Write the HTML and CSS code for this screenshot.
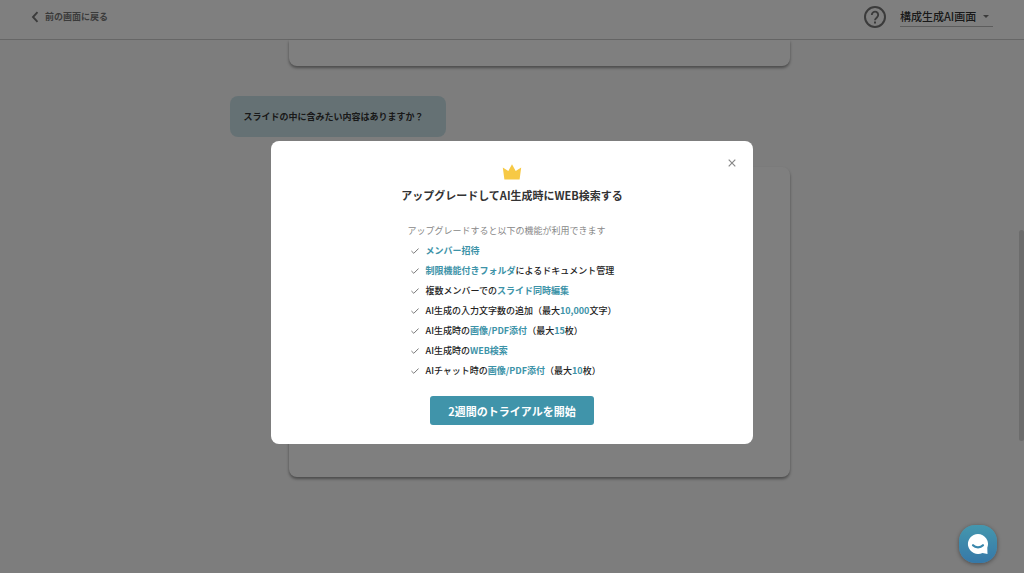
FILE: index.html
```html
<!DOCTYPE html>
<html lang="ja">
<head>
    <meta charset="UTF-8">
    <meta name="viewport" content="width=device-width, initial-scale=1.0">
    <title>構成生成AI画面</title>
    <link rel="stylesheet" href="styles.css">
</head>
<body>
    <div class="page">
        <header class="header">
            <a class="back" href="#">
                <svg width="8" height="12" viewBox="0 0 8 12" aria-hidden="true">
                    <path d="M6.500 1.200 2 6l4.500 4.800" fill="none" stroke="currentColor" stroke-width="1.900"/>
                </svg>
                前の画面に戻る
            </a>
            <div class="header-right">
                <button class="help" aria-label="ヘルプ">
                    <svg width="24" height="24" viewBox="0 0 24 24" aria-hidden="true">
                        <circle cx="12" cy="12" r="10" fill="none" stroke="currentColor" stroke-width="2"/>
                        <path d="M8.800 9.900a3.200 3.200 0 1 1 5.300 2.400c-1.200 1-2.100 1.500-2.100 3" fill="none" stroke="currentColor" stroke-width="1.900"/>
                        <rect x="11" y="16.500" width="2" height="2" fill="currentColor"/>
                    </svg>
                </button>
                <div class="screen-select">
                    <select aria-label="画面の切り替え">
                        <option>構成生成AI画面</option>
                    </select>
                    <svg width="6" height="3" viewBox="0 0 6 3" aria-hidden="true">
                        <path d="M0 0h6L3 3z" fill="currentColor"/>
                    </svg>
                </div>
            </div>
        </header>

        <div class="content">
            <main class="chat">
                <div class="card card-prev"></div>
                <p class="bubble">スライドの中に含みたい内容はありますか？</p>
                <div class="card card-answer"></div>
            </main>
            <div class="scrollbar"><div class="thumb"></div></div>
        </div>
    </div>

    <div class="overlay">
        <section class="modal" role="dialog" aria-modal="true" aria-labelledby="modalTitle">
            <button class="close" aria-label="閉じる">
                <svg width="8" height="8" viewBox="0 0 8 8" aria-hidden="true">
                    <path d="M.7.7l6.600 6.600M7.300.7.7 7.300" stroke="currentColor" stroke-width="1.200"/>
                </svg>
            </button>
            <svg class="crown" width="20" height="16" viewBox="0 0 20 16" aria-hidden="true">
                <path d="M.8 3.400 6.300 7 10 .2 13.700 7l5.500-3.600L17.600 15.400H2.400z" fill="#f7c945"/>
            </svg>
            <h1 id="modalTitle">アップグレードしてAI生成時にWEB検索する</h1>

            <div class="features">
                <p>アップグレードすると以下の機能が利用できます</p>
                <ul>
                    <li><span><b>メンバー招待</b></span></li>
                    <li><span><b>制限機能付きフォルダ</b>によるドキュメント管理</span></li>
                    <li><span>複数メンバーでの<b>スライド同時編集</b></span></li>
                    <li><span>AI生成の入力文字数の追加（最大<b>10,000</b>文字）</span></li>
                    <li><span>AI生成時の<b>画像/PDF添付</b>（最大<b>15</b>枚）</span></li>
                    <li><span>AI生成時の<b>WEB検索</b></span></li>
                    <li><span>AIチャット時の<b>画像/PDF添付</b>（最大<b>10</b>枚）</span></li>
                </ul>
            </div>

            <button class="trial">2週間のトライアルを開始</button>
        </section>
    </div>

    <button class="support" aria-label="サポートチャット">
        <svg width="22" height="22" viewBox="0 0 22 22" aria-hidden="true">
            <path d="M11 1a10 10 0 1 0 4.500 18.900L20.500 21l-.2-6.300A10 10 0 0 0 11 1z" fill="#fff"/>
            <path d="M6 12.200c2.600 2.800 7.400 2.800 10 0" fill="none" stroke="#3a87ac" stroke-width="2.200" stroke-linecap="round"/>
        </svg>
    </button>

    <script>
        // check mark in front of every feature
        document.querySelectorAll(".features li").forEach(li => {
            li.insertAdjacentHTML("afterbegin", `
                <svg width="8" height="6" viewBox="0 0 8 6" aria-hidden="true">
                    <path d="M.4 3 2.800 5.300 7.600.5" fill="none" stroke="currentColor"/>
                </svg>
            `);
        });
    </script>
</body>
</html>
```
FILE: styles.css
```css
* {
    margin: 0;
    padding: 0;
    box-sizing: border-box;
}

body {
    font-family: "Noto Sans CJK JP", sans-serif;
    font-size: 9px;
    line-height: 20px;
    color: #333;
}

button, select {
    font-family: inherit;
    border: none;
    background: none;
    cursor: pointer;
}

svg {
    display: block;
    flex: none;
}

ul {
    list-style: none;
}

.page {
    height: 100vh;
    display: flex;
    flex-direction: column;
    background-color: #fafafa;
    overflow: hidden;
}

.header {
    height: 40px;
    flex: none;
    display: flex;
    justify-content: space-between;
    padding: 0 31px;
    background-color: #fff;
    border-bottom: 1px solid #ccc;
}

.back {
    display: flex;
    align-items: center;
    gap: 6px;
    height: 33px;
    color: #777;
    font-weight: bold;
    text-decoration: none;
}

.header-right {
    display: flex;
    align-items: center;
    gap: 13px;
    height: 33px;
}

.help {
    color: #777;
}

.screen-select {
    display: flex;
    align-items: center;
    gap: 6px;
    height: 21px;
    padding-right: 4px;
    border-bottom: 1px solid #bbb;
    color: #777;
}

.screen-select select {
    appearance: none;
    font-size: 11px;
    font-weight: 500;
    line-height: 20px;
    color: #333;
}

.content {
    flex: 1;
    min-height: 0;
    display: flex;
}

.chat {
    flex: 1;
    display: flex;
    flex-direction: column;
    gap: 30px;
    max-width: 560px;
    margin: 0 auto;
}

.card {
    margin-left: 59px;
    flex: none;
    background-color: #fff;
    border-radius: 8px;
    box-shadow: 0 2px 3px rgba(0, 0, 0, 0.4);
}

.card-prev {
    height: 26px;
    border-radius: 0 0 8px 8px;
}

.card-answer {
    height: 310px;
}

.bubble {
    align-self: flex-start;
    min-width: 216px;
    padding: 11px 14px 10px;
    border-radius: 8px;
    background-color: #cbe3e9;
    font-weight: bold;
}

.scrollbar {
    width: 5px;
    padding-top: 190px;
}

.thumb {
    height: 211px;
    border-radius: 3px;
    background-color: #d8d8d8;
}

.overlay {
    position: fixed;
    inset: 0;
    display: flex;
    align-items: center;
    justify-content: center;
    padding-top: 12px;
    background-color: rgba(0, 0, 0, 0.5);
}

.modal {
    position: relative;
    width: 47%;
    min-width: 300px;
    display: flex;
    flex-direction: column;
    align-items: center;
    padding: 23px 20px 19px;
    background-color: #fff;
    border-radius: 8px;
}

.close {
    position: absolute;
    top: 14px;
    right: 13px;
    padding: 4px;
    color: #888;
}

.modal h1 {
    margin: 5px 0 16px;
    font-size: 11px;
    line-height: 20px;
}

.features p {
    color: #888;
}

.features li {
    display: flex;
    align-items: center;
    gap: 7px;
    padding-left: 3px;
    color: #777;
}

.features span {
    color: #222;
    font-weight: 500;
}

.features b {
    color: #3d93a8;
}

.trial {
    height: 29px;
    margin-top: 15px;
    padding: 0 18px;
    border-radius: 3px;
    background-color: #4094aa;
    color: #fff;
    font-size: 11px;
    font-weight: bold;
}

.support {
    position: fixed;
    right: 27px;
    bottom: 10px;
    width: 38px;
    height: 38px;
    display: flex;
    align-items: center;
    justify-content: center;
    border-radius: 16px;
    background: linear-gradient(#4497ae, #3678a8);
    box-shadow: 0 1px 4px rgba(0, 0, 0, 0.4);
}
```
